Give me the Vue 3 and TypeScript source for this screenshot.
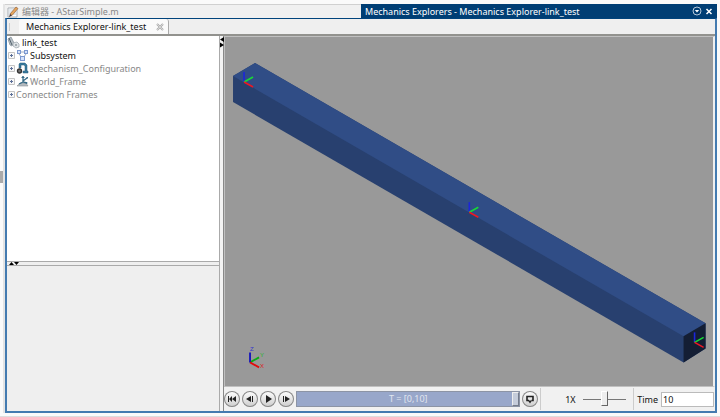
<script setup lang="ts">
import { ref } from 'vue'

interface TreeItem {
  label: string
  icon: 'subsystem' | 'mechanism' | 'frame' | ''
  muted: boolean
}

interface Triad {
  x: number
  y: number
}

const items: TreeItem[] = [
  { label: 'Subsystem', icon: 'subsystem', muted: false },
  { label: 'Mechanism_Configuration', icon: 'mechanism', muted: true },
  { label: 'World_Frame', icon: 'frame', muted: true },
  { label: 'Connection Frames', icon: '', muted: true },
]

const triads: Triad[] = [
  { x: 19, y: 45 },
  { x: 244, y: 175 },
  { x: 469, y: 305 },
]

const controls = [
  { name: 'Go to start', path: 'M4 5h1v6H4zM8 5v6L5 8zM12 5v6L8 8z' },
  { name: 'Step back', path: 'M9 5v6L4 8zM10 5h1v6h-1z' },
  { name: 'Play', path: 'M6 4L12 8L6 12z' },
  { name: 'Step forward', path: 'M5 5h1v6H5zM7 5l5 3l-5 3z' },
]

const position = ref(10)
const speed = ref(50)
const time = ref('10')
</script>

<template>
  <div class="desktop">
    <aside class="gutter"><span class="grip"></span></aside>
    <main class="window">
      <header class="titles">
        <div class="title editor">
          <svg class="pencil" width="12" height="12" viewBox="0 0 12 12" aria-hidden="true">
            <path d="M1 2h9v9H1z" fill="#fff" stroke="#a9afb5" />
            <path d="M2 4h7M2 6h7M2 8h7" stroke="#c4d0dc" />
            <path d="M3 8L9 1l2 1.500L5 9.500z" fill="#e5a55c" stroke="#8d5931" stroke-width=".6" />
            <path d="M3 8l-1 3l3-1.500z" fill="#433" />
          </svg>
          <span>编辑器 - AStarSimple.m</span>
        </div>
        <div class="title active">
          <span>Mechanics Explorers - Mechanics Explorer-link_test</span>
          <span class="window-actions">
            <button type="button" aria-label="Window menu">
              <svg width="10" height="10" viewBox="0 0 10 10">
                <circle cx="5" cy="5" r="4" fill="none" stroke="#b5c8da" />
                <path d="M2.800 4h4.400L5 6.600z" fill="#fff" />
              </svg>
            </button>
            <button type="button" aria-label="Close window">
              <svg width="10" height="10" viewBox="0 0 10 10">
                <path d="M2.500 3l5 5M7.500 3l-5 5" stroke="#fff" stroke-width="1.500" />
              </svg>
            </button>
          </span>
        </div>
      </header>

      <div class="frame">
        <nav class="tabs">
          <span class="tab-grip"></span>
          <div class="tab">
            <span>Mechanics Explorer-link_test</span>
            <button type="button" aria-label="Close tab">
              <svg width="8" height="8" viewBox="0 0 8 8">
                <path d="M1 1l6 6M7 1L1 7" stroke="#aaa" stroke-width="2" />
                <path d="M1 1l6 6M7 1L1 7" stroke="#eee" stroke-width=".6" />
              </svg>
            </button>
          </div>
        </nav>

        <div class="workspace">
          <section class="side">
            <div class="tree">
              <div class="root">
                <svg width="13" height="13" viewBox="0 0 13 13" aria-hidden="true">
                  <path d="M1 3l3-2l3 6l-2 3l-2-1z" fill="#b8c0c6" stroke="#87929a" stroke-width=".8" />
                  <path d="M2 2l3 7" stroke="#52616c" />
                  <path d="M6 7l4-1l2 2v3l-3 1l-3-2z" fill="#e0e4e7" stroke="#a2abb1" stroke-width=".8" />
                  <circle cx="9" cy="9" r="1" fill="#8e999f" />
                </svg>
                <span>link_test</span>
              </div>
              <ul>
                <li v-for="item in items" :key="item.label" :class="{ muted: item.muted }">
                  <button class="expander" type="button" :aria-label="`Expand ${item.label}`">
                    <svg width="7" height="7" viewBox="0 0 7 7">
                      <path d="M.5 .5h6v6h-6z" fill="#f8f8f8" stroke="#c4c4c4" />
                      <path d="M2 3.500h3M3.500 2v3" stroke="#5d7098" />
                    </svg>
                  </button>
                  <svg v-if="item.icon === 'subsystem'" width="13" height="13" viewBox="0 0 13 13" aria-hidden="true">
                    <path d="M4 3h5M3 5l3 4M10 5L7 9" fill="none" stroke="#a0abc0" />
                    <g fill="#d5e2fc" stroke="#7c99cf">
                      <rect x="1.500" y="1.500" width="3" height="3" />
                      <rect x="8.500" y="1.500" width="3" height="3" />
                      <rect x="4.500" y="7.500" width="4" height="4" />
                    </g>
                  </svg>
                  <svg v-if="item.icon === 'mechanism'" width="13" height="13" viewBox="0 0 13 13" aria-hidden="true">
                    <path d="M3 6V2l1-1h5l2 2v6h1v2H7V9h2V4L8 3H5v3z" fill="#397b9d" stroke="#255b79" stroke-width=".5" />
                    <circle cx="3.500" cy="9" r="2" fill="#777" stroke="#333" stroke-width="1.400" />
                  </svg>
                  <svg v-if="item.icon === 'frame'" width="13" height="13" viewBox="0 0 13 13" aria-hidden="true">
                    <path d="M1 11l3-3h6l2 3z" fill="#b4bbc0" stroke="#8b9297" stroke-width=".6" />
                    <path d="M7 1v6l4 1M7 7L3 9M7 6l4-3" fill="none" stroke="#376a86" stroke-width="1.300" />
                    <path d="M5 3l2-2l2 2zM10 2h2v2zM10 7l2 1l-2 1z" fill="#376a86" />
                  </svg>
                  <span>{{ item.label }}</span>
                </li>
              </ul>
            </div>
            <div class="split-row">
              <svg width="12" height="3" viewBox="0 0 12 3" aria-hidden="true">
                <path d="M1 3l2.500-3L6 3zM6 0h5L8.500 3z" fill="#000" />
              </svg>
            </div>
            <div class="details"></div>
          </section>

          <div class="split-column">
            <svg width="4" height="12" viewBox="0 0 4 12" aria-hidden="true">
              <path d="M4 1v5L0 3.500zM0 6.500l4 2.500l-4 2.500z" fill="#000" />
            </svg>
          </div>

          <section class="viewer">
            <div class="canvas">
              <svg class="scene" viewBox="0 0 487 349" role="img" aria-label="Link model">
                <path d="M30 26L480 286V311L458 325L8 65V39z" fill="#28406f" />
                <path d="M30 26L480 286L458 299L8 39z" fill="#304d86" />
                <path d="M458 299L480 286V311L458 325z" fill="#141e34" />
                <g v-for="triad in triads" :key="triad.x" :transform="`translate(${triad.x} ${triad.y})`" fill="none" stroke-width="1.600">
                  <path d="M0 0V-10" stroke="#1c25db" />
                  <path d="M0 0L9 -5" stroke="#17da35" />
                  <path d="M0 0L9 5" stroke="#ed1823" />
                </g>
                <g transform="translate(25 325)" fill="none" stroke-width="1.800">
                  <path d="M0 0L9 -5" stroke="#0bab13" />
                  <path d="M0 0V-10" stroke="#1010bd" />
                  <path d="M0 0L9 5" stroke="#e00c0c" />
                </g>
                <g class="axis-text">
                  <text x="25" y="314" fill="#3434cc">Z</text>
                  <text x="35" y="320" fill="#25b42c">Y</text>
                  <text x="35" y="331" fill="#dc2222">X</text>
                </g>
              </svg>
            </div>

            <footer class="playback">
              <div class="controls">
                <button v-for="control in controls" :key="control.name" class="round" type="button" :aria-label="control.name">
                  <svg width="16" height="16" viewBox="0 0 16 16"><path :d="control.path" fill="#222" /></svg>
                </button>
              </div>
              <label class="timeline">
                <input v-model="position" type="range" min="0" max="10" aria-label="Simulation time" />
                <span>T = [0,10]</span>
              </label>
              <button class="round" type="button" aria-label="Loop playback">
                <svg width="16" height="16" viewBox="0 0 16 16">
                  <path d="M7 9.500H5v-4h6v4H9.500" fill="none" stroke="#222" stroke-width="1.600" />
                  <path d="M6 9.500h4l-2 3z" fill="#222" />
                </svg>
              </button>
              <div class="speed">
                <label for="speed">1X</label>
                <input id="speed" v-model="speed" type="range" min="0" max="100" />
              </div>
              <div class="time">
                <label for="time">Time</label>
                <input id="time" v-model="time" type="text" />
              </div>
            </footer>
          </section>
        </div>
      </div>
    </main>
  </div>
</template>

<style>
body {
  margin: 0;
}
</style>

<style scoped>
* {
  box-sizing: border-box;
}

.desktop {
  display: flex;
  min-height: 100vh;
  padding: 4px 3px 3px 0;
  background: #fafafa;
  border-bottom: 1px solid #ddd;
  color: #111;
  font: 9px/13px "Noto Sans", "Noto Sans CJK SC", sans-serif;
}

button {
  display: grid;
  place-items: center;
  padding: 0;
  border: 0;
  background: none;
}

svg {
  display: block;
  flex: none;
}

.gutter {
  display: flex;
  align-items: center;
  width: 5px;
  border-right: 2px solid #e4e4e4;
}

.grip {
  width: 3px;
  height: 12px;
  margin-bottom: 64px;
  background: #aaa;
}

.window {
  display: flex;
  flex: 1;
  flex-direction: column;
  min-width: 0;
}

.titles {
  display: grid;
  grid-template-columns: 1fr 1fr;
  height: 14px;
}

.title {
  display: flex;
  align-items: center;
  white-space: nowrap;
}

.editor {
  gap: 3px;
  padding-left: 2px;
  border-top: 1px solid #d0d0d0;
  background: #f0f0f0;
  color: #888;
}

.active {
  justify-content: space-between;
  padding: 0 3px 0 4px;
  background: #003e74;
  color: #fff;
}

.window-actions {
  display: flex;
  gap: 2px;
}

.frame {
  display: flex;
  flex: 1;
  flex-direction: column;
  border: 2px solid #447bb0;
  border-top: 1px solid #00437c;
}

.tabs {
  display: flex;
  height: 17px;
  border-bottom: 2px solid #92928e;
  background: #efefef;
}

.tab-grip {
  width: 10px;
  margin: 4px 0 3px 2px;
  border-left: 1px solid #ccc;
}

.tab {
  display: flex;
  align-items: center;
  gap: 10px;
  padding: 0 4px 0 7px;
  border: 1px solid #aaa;
  border-width: 0 1px 0 0;
  border-radius: 3px 3px 0 0;
  background: #fafafa;
}

.workspace {
  display: flex;
  flex: 1;
  min-height: 0;
}

.side {
  display: flex;
  flex: 0 0 30%;
  flex-direction: column;
  background: #efefef;
}

.tree {
  flex: 20;
  background: #fff;
}

.root {
  display: flex;
  align-items: center;
  height: 13px;
  gap: 2px;
}

ul {
  margin: 0;
  padding: 0;
  list-style: none;
}

li {
  display: flex;
  align-items: center;
  gap: 1px;
  height: 13px;
  padding-left: 1px;
}

.expander {
  width: 7px;
}

.muted {
  color: #888;
}

.split-row {
  height: 5px;
  padding-left: 1px;
  border: 1px solid #aaa;
  border-width: 1px 0;
}

.details {
  flex: 13;
}

.split-column {
  width: 5px;
  border-left: 1px solid #aaa;
  border-right: 1px solid #888;
  background: #f3f3f3;
}

.viewer {
  display: flex;
  flex: 1;
  flex-direction: column;
  min-width: 0;
}

.canvas {
  display: flex;
  flex: 1;
  min-height: 0;
  border: 1px solid #c0c0c0;
  border-right: 2px solid #efefef;
  background: #999;
}

.scene {
  flex: 1;
  width: 100%;
  min-width: 0;
}

.axis-text {
  font: 6px "Liberation Sans", sans-serif;
}

.playback {
  display: flex;
  align-items: center;
  gap: 2px;
  height: 24px;
  padding-right: 1px;
  background: #f1f1f1;
}

.controls {
  display: flex;
  gap: 2px;
}

.round {
  flex: none;
  width: 16px;
  height: 16px;
  border-radius: 50%;
  background: linear-gradient(#fff, #ccc);
  box-shadow: inset 0 0 0 1px #888;
}

.timeline {
  display: grid;
  flex: 1;
  min-width: 0;
  height: 16px;
  border: 1px solid #8c94a5;
  background: #98a7ca;
}

.timeline input,
.timeline span {
  grid-area: 1 / 1;
}

.timeline span {
  color: #e0e5ef;
  text-align: center;
  pointer-events: none;
}

input[type="range"] {
  width: 100%;
  margin: 0;
  appearance: none;
  background: transparent;
}

.timeline input::-webkit-slider-thumb {
  width: 7px;
  height: 14px;
  appearance: none;
  border: 1px solid #747b8a;
  border-color: #eee #747b8a #747b8a #eee;
  background: #c5ccda;
}

.speed {
  display: flex;
  align-items: center;
  gap: 7px;
  width: 94px;
  height: 22px;
  padding: 0 7px 0 24px;
  border: 1px solid #ccc;
  border-width: 0 1px;
}

.speed input {
  flex: 1;
  min-width: 0;
  height: 16px;
}

.speed input::-webkit-slider-runnable-track {
  display: flex;
  align-items: center;
  height: 16px;
  background: linear-gradient(#777, #777) center / 100% 1px no-repeat;
}

.speed input::-webkit-slider-thumb {
  width: 7px;
  height: 15px;
  appearance: none;
  border: 1px solid #666;
  border-color: #fff #666 #666 #fff;
  background: #eee;
}

.time {
  display: flex;
  align-items: center;
  gap: 3px;
  padding-left: 1px;
}

.time input {
  width: 53px;
  height: 15px;
  padding: 0 1px;
  border: 1px solid #bbb;
  background: #fff;
  color: inherit;
  font: inherit;
}
</style>
